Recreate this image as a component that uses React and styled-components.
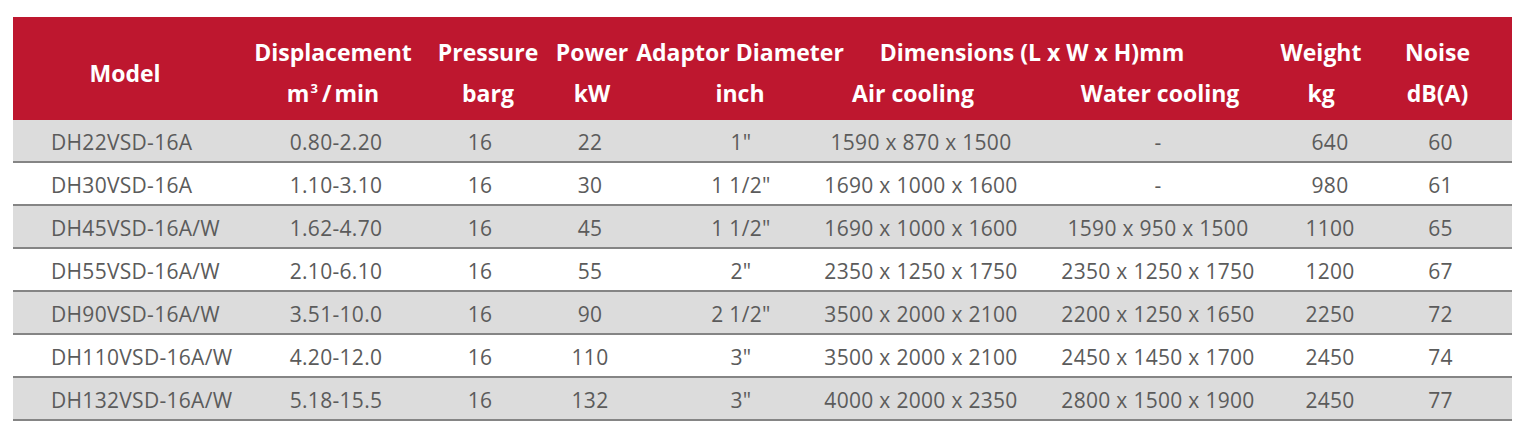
import React from "react";
import styled, { createGlobalStyle } from "styled-components";

const GlobalStyle = createGlobalStyle`
  html, body {
    margin: 0;
    padding: 0;
    background: #ffffff;
  }
  body {
    font-family: "Open Sans", "Noto Sans", Arial, sans-serif;
  }
`;

const COLUMNS = "224px 194px 110px 100px 198px 170px 300px 40px 163px";

// shift = how far (px) the text centre sits from the column centre
const headers = [
  { title: "Model", shift: 0 },
  { title: "Displacement", unit: "m3", shift: -1 },
  { title: "Pressure", unit: "barg", shift: 2 },
  { title: "Power", unit: "kW", shift: 1 },
  { title: "Adaptor Diameter", unit: "inch", shift: 0 },
];

const tail = [
  { title: "Weight", unit: "kg", shift: -8 },
  { title: "Noise", unit: "dB(A)", shift: 7 },
];

const dataShifts = [0, 2, -6, -1, 1, -3, -1, 1, 10];

const rows = [
  ["DH22VSD-16A", "0.80-2.20", "16", "22", '1"', "1590 x 870 x 1500", "-", "640", "60"],
  ["DH30VSD-16A", "1.10-3.10", "16", "30", '1 1/2"', "1690 x 1000 x 1600", "-", "980", "61"],
  ["DH45VSD-16A/W", "1.62-4.70", "16", "45", '1 1/2"', "1690 x 1000 x 1600", "1590 x 950 x 1500", "1100", "65"],
  ["DH55VSD-16A/W", "2.10-6.10", "16", "55", '2"', "2350 x 1250 x 1750", "2350 x 1250 x 1750", "1200", "67"],
  ["DH90VSD-16A/W", "3.51-10.0", "16", "90", '2 1/2"', "3500 x 2000 x 2100", "2200 x 1250 x 1650", "2250", "72"],
  ["DH110VSD-16A/W", "4.20-12.0", "16", "110", '3"', "3500 x 2000 x 2100", "2450 x 1450 x 1700", "2450", "74"],
  ["DH132VSD-16A/W", "5.18-15.5", "16", "132", '3"', "4000 x 2000 x 2350", "2800 x 1500 x 1900", "2450", "77"],
];

function Unit({ value }) {
  if (value === "m3") {
    return (
      <span>
        m<Sup>3</Sup>
        <Slash>/</Slash>min
      </span>
    );
  }
  return <span>{value}</span>;
}

function App() {
  return (
    <Page>
      <GlobalStyle />
      <Table>
        <HeaderRow>
          {headers.map((h) => (
            <HeaderCell key={h.title} $shift={h.shift} $rows="1 / 3">
              <span>{h.title}</span>
              {h.unit && <Unit value={h.unit} />}
            </HeaderCell>
          ))}
          <HeaderCell $shift={-42} $rows="1 / 2" $cols="6 / 8">
            <span>Dimensions (L x W x H)mm</span>
          </HeaderCell>
          <HeaderCell $shift={-11} $rows="2 / 3" $cols="6 / 7">
            <span>Air cooling</span>
          </HeaderCell>
          <HeaderCell $shift={1} $rows="2 / 3" $cols="7 / 8">
            <span>Water cooling</span>
          </HeaderCell>
          {tail.map((h) => (
            <HeaderCell key={h.title} $shift={h.shift} $rows="1 / 3">
              <span>{h.title}</span>
              <Unit value={h.unit} />
            </HeaderCell>
          ))}
        </HeaderRow>

        {rows.map((row, i) => (
          <Row key={row[0]} $striped={i % 2 === 0}>
            {row.map((value, j) =>
              j === 0 ? (
                <ModelCell key={j}>{value}</ModelCell>
              ) : (
                <Cell key={j} $shift={dataShifts[j]}>
                  {value}
                </Cell>
              )
            )}
          </Row>
        ))}
      </Table>
    </Page>
  );
}

const Page = styled.div`
  padding: 17px 16px 0 13px;
`;

const Table = styled.div`
  width: 1499px;
  display: flex;
  flex-direction: column;
`;

const HeaderRow = styled.div`
  display: grid;
  grid-template-columns: ${COLUMNS};
  grid-template-rows: 41px 41px;
  padding: 15px 0 6px;
  background: #be172f;
  color: #ffffff;
  font-size: 23px;
  font-weight: 700;
  line-height: 41px;
`;

const HeaderCell = styled.div`
  grid-row: ${(p) => p.$rows};
  ${(p) => (p.$cols ? `grid-column: ${p.$cols};` : "")}
  display: flex;
  flex-direction: column;
  align-items: center;
  justify-content: center;
  white-space: nowrap;
  padding-left: ${(p) => Math.max(0, p.$shift * 2)}px;
  padding-right: ${(p) => Math.max(0, -p.$shift * 2)}px;
  min-width: 0;
`;

const Sup = styled.span`
  font-size: 13px;
  vertical-align: 9px;
  line-height: 0;
  margin-left: 1px;
`;

const Slash = styled.span`
  margin: 0 3px 0 4px;
`;

const Row = styled.div`
  display: grid;
  grid-template-columns: ${COLUMNS};
  height: 37px;
  padding-top: 4px;
  border-bottom: 2px solid #858585;
  background: ${(p) => (p.$striped ? "#dcdcdc" : "#ffffff")};
  color: #5b5b5b;
  font-size: 21px;
  letter-spacing: 0.3px;
  line-height: 37px;
`;

const ModelCell = styled.div`
  padding-left: 38px;
  white-space: nowrap;
`;

const Cell = styled.div`
  display: flex;
  justify-content: center;
  white-space: nowrap;
  min-width: 0;
  padding-left: ${(p) => Math.max(0, p.$shift * 2)}px;
  padding-right: ${(p) => Math.max(0, -p.$shift * 2)}px;
`;

export default App;
